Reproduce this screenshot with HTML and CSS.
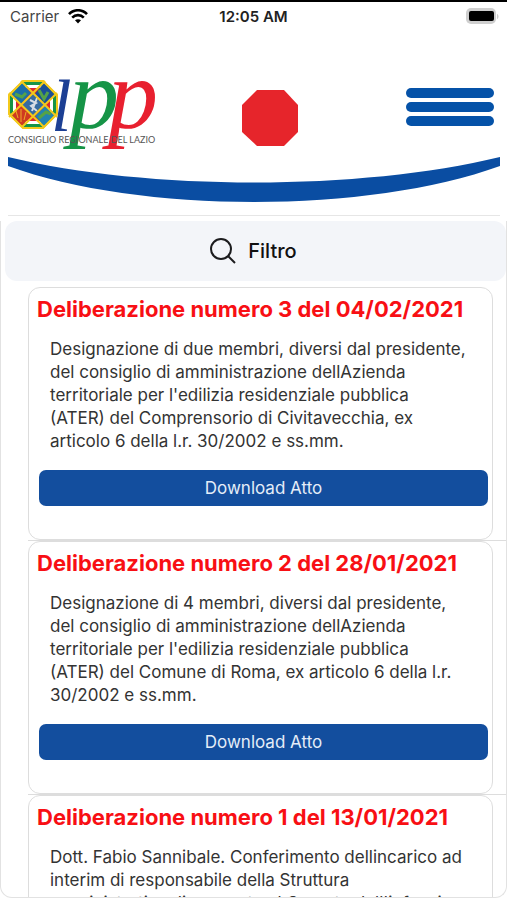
FILE: index.html
```html
<!DOCTYPE html>
<html lang="it">
<head>
    <meta charset="UTF-8">
    <meta name="viewport" content="width=device-width, initial-scale=1.0">
    <title>Consiglio Regionale del Lazio</title>
    <link rel="stylesheet" href="styles.css">
</head>
<body>
    <div class="status-bar">
        <span class="carrier">Carrier
            <svg width="20" height="15" viewBox="0 0 20 15" fill="none" stroke="#000" stroke-width="2.6">
                <path d="M1 5.2C6-.1 14-.1 19 5.2"/>
                <path d="M4.2 8.6c3.3-3.3 8.300-3.300 11.600 0"/>
                <path d="M10 14.500l-3-3.200c1.700-1.500 4.300-1.500 6 0z" fill="#000" stroke="none"/>
            </svg>
        </span>
        <span class="time">12:05 AM</span>
        <span class="battery">
            <svg width="34" height="17" viewBox="0 0 34 17">
                <rect x="0" y="0" width="30" height="16" rx="5" fill="#cfcfcf"/>
                <path d="M31 6c2 .5 2 4.500 0 5z" fill="#cfcfcf"/>
                <rect x="3" y="3" width="25" height="10" rx="2" fill="#000"/>
            </svg>
        </span>
    </div>

    <header>
        <div class="header-row">
            <a class="logo" href="#" aria-label="Consiglio Regionale del Lazio">
                <svg width="152" height="72" viewBox="0 0 152 72">
                    <text class="l" x="43" y="53">l</text>
                    <text class="p green" x="61" y="50">p</text>
                    <text class="p red" x="100" y="50">p</text>
                    <g transform="translate(0 2)">
                        <path d="M15 0h20l15 15v19L35 49H15L0 34V15z" fill="#f3c91c"/>
                        <path d="M16 2h18l14 14v17L34 47H16L2 33V16z" fill="#169447"/>
                        <path d="M18 5h14l13 12v14L32 44H18L5 31V17z" fill="#fff"/>
                        <path d="M18 8h14l10 10v13L32 41H18L8 31V18z" fill="#d9282f"/>
                        <path d="M14 3l9 10-10 11L3 15z" fill="#1b6fa8"/>
                        <path d="M36 3l11 12-10 10-10-11z" fill="#1b4f96"/>
                        <path d="M13 26l10 10-9 10L3 34z" fill="#cf3a20"/>
                        <path d="M37 26l10 8-11 12-9-10z" fill="#2383b0"/>
                        <path d="M25 13l12 12-12 12-12-12z" fill="#376ba0"/>
                        <path d="M7 14l7 3 4-4M31 10l5 9 4-7M31 38l7-6 5 2" fill="none" stroke="#55a247" stroke-width="3"/>
                        <path d="M22 20l6 3-5 3 6 5M29 18l-5 13" fill="none" stroke="#d8dde5" stroke-width="2"/>
                        <path d="M8 31l2 7M13 29v13M18 32l-2 8" stroke="#edab2a"/>
                        <path d="M13 1l36 36M37 1L1 37M1 13l35 34M49 13L14 47" fill="none" stroke="#f3c91c" stroke-width="2"/>
                        <path d="M15 1h20l14 14v19L35 48H15L1 34V15z" fill="none" stroke="#f3c91c" stroke-width="2"/>
                    </g>
                    <text class="caption" x="0" y="65">CONSIGLIO REGIONALE DEL LAZIO</text>
                </svg>
            </a>
            <button class="stop" aria-label="Stop">
                <svg width="56" height="56" viewBox="0 0 56 56"><path d="M15 0h27l14 15v27L42 56H15L0 42V15z" fill="#e6252b"/></svg>
            </button>
            <button class="menu" aria-label="Menu">
                <span></span>
                <span></span>
                <span></span>
            </button>
        </div>
        <svg class="swoosh" viewBox="0 0 492 46" preserveAspectRatio="none">
            <path d="M0 0C140 34 352 34 492 0V9C360 57 132 57 0 9z" fill="#0a4da2"/>
        </svg>
    </header>

    <main>
        <button class="filter">
            <svg width="26" height="26" viewBox="0 0 26 26" fill="none" stroke="#1c1c1e" stroke-width="2">
                <circle cx="11" cy="11" r="10"/>
                <path d="M18 18l7 7"/>
            </svg>
            Filtro
        </button>
        <ul class="list">
            <li>
                <article class="card">
                    <h2>Deliberazione numero 3 del 04/02/2021</h2>
                    <p>Designazione di due membri, diversi dal presidente, del consiglio di amministrazione dellAzienda territoriale per l'edilizia residenziale pubblica (ATER) del Comprensorio di Civitavecchia, ex articolo 6 della l.r. 30/2002 e ss.mm.</p>
                    <button class="download">Download Atto</button>
                </article>
            </li>
            <li>
                <article class="card">
                    <h2>Deliberazione numero 2 del 28/01/2021</h2>
                    <p>Designazione di 4 membri, diversi dal presidente, del consiglio di amministrazione dellAzienda territoriale per l'edilizia residenziale pubblica (ATER) del Comune di Roma, ex articolo 6 della l.r. 30/2002 e ss.mm.</p>
                    <button class="download">Download Atto</button>
                </article>
            </li>
            <li>
                <article class="card">
                    <h2>Deliberazione numero 1 del 13/01/2021</h2>
                    <p>Dott. Fabio Sannibale. Conferimento dellincarico ad interim di responsabile della Struttura amministrativa di supporto al Garante dell'infanzia e</p>
                    <button class="download">Download Atto</button>
                </article>
            </li>
        </ul>
    </main>
</body>
</html>
```
FILE: styles.css
```css
* {
    box-sizing: border-box;
}
body {
    font-family: Inter, "Liberation Sans", sans-serif;
    margin: 0;
    height: 100vh;
    display: flex;
    flex-direction: column;
    background: #fff;
    border-top: 2px solid #000;
    overflow: hidden;
}
button {
    font-family: inherit;
    border: none;
    padding: 0;
    background: none;
    cursor: pointer;
}
svg {
    display: block;
}

/* status bar */
.status-bar {
    display: grid;
    grid-template-columns: 1fr auto 1fr;
    align-items: center;
    height: 28px;
    padding: 0 7px 0 10px;
    font-size: 15px;
}
.carrier {
    display: flex;
    align-items: center;
    gap: 9px;
    color: #444;
}
.time {
    margin-right: 3px;
    font-weight: 600;
    color: #222;
}
.battery {
    justify-self: end;
}

/* header */
header {
    margin: 48px 7px 0 8px;
    padding-bottom: 12px;
    border-bottom: 1px solid #e6e6e6;
}
.header-row {
    display: flex;
    justify-content: space-between;
    align-items: flex-start;
    padding-right: 6px;
}
.logo svg {
    overflow: visible;
}
.logo text {
    font-family: "Liberation Serif", serif;
    font-style: italic;
}
.logo .l {
    font-size: 74px;
    fill: #1c3f94;
}
.logo .p {
    font-size: 100px;
}
.logo .green {
    fill: #169447;
}
.logo .red {
    fill: #e8202f;
}
.logo .caption {
    font-family: Lato, sans-serif;
    font-style: normal;
    font-size: 9px;
    fill: #555;
}
.stop {
    margin-top: 12px;
    margin-right: 26px;
}
.menu {
    display: flex;
    flex-direction: column;
    gap: 4px;
    width: 88px;
    margin-top: 10px;
}
.menu span {
    height: 10px;
    border-radius: 5px;
    background: #0552a8;
}
.swoosh {
    width: 100%;
    height: 46px;
    margin-top: 7px;
}

/* list */
main {
    flex: 1;
    min-height: 0;
    margin: 5px 0 2px;
    border: 1px solid #e2e2e2;
    border-top: none;
    border-radius: 0 0 12px 12px;
    overflow: hidden;
}
.filter {
    display: flex;
    align-items: center;
    justify-content: center;
    gap: 12px;
    width: calc(100% - 4px);
    height: 60px;
    margin-left: 4px;
    padding-right: 4px;
    border-radius: 12px;
    background: #f3f5f9;
    font-size: 20px;
    font-weight: 500;
    color: #111;
}
.list {
    list-style: none;
    margin: 6px 0 0 27px;
    padding: 0;
}
.list li {
    border-bottom: 1px solid #ddd;
}
.card {
    margin-right: 13px;
    padding: 5px 4px 33px 8px;
    border: 1px solid #ddd;
    border-radius: 12px;
}
.card h2 {
    margin: 0 0 13px;
    font-size: 22px;
    line-height: 32px;
    font-weight: 700;
    color: #f80f14;
    white-space: nowrap;
}
.card p {
    margin: 0 20px 17px 13px;
    font-size: 17px;
    line-height: 23px;
    color: #333;
}
.download {
    display: block;
    width: calc(100% - 2px);
    height: 36px;
    margin-left: 2px;
    border-radius: 7px;
    background: #134e9e;
    font-size: 17px;
    color: #e4edf8;
}
```
